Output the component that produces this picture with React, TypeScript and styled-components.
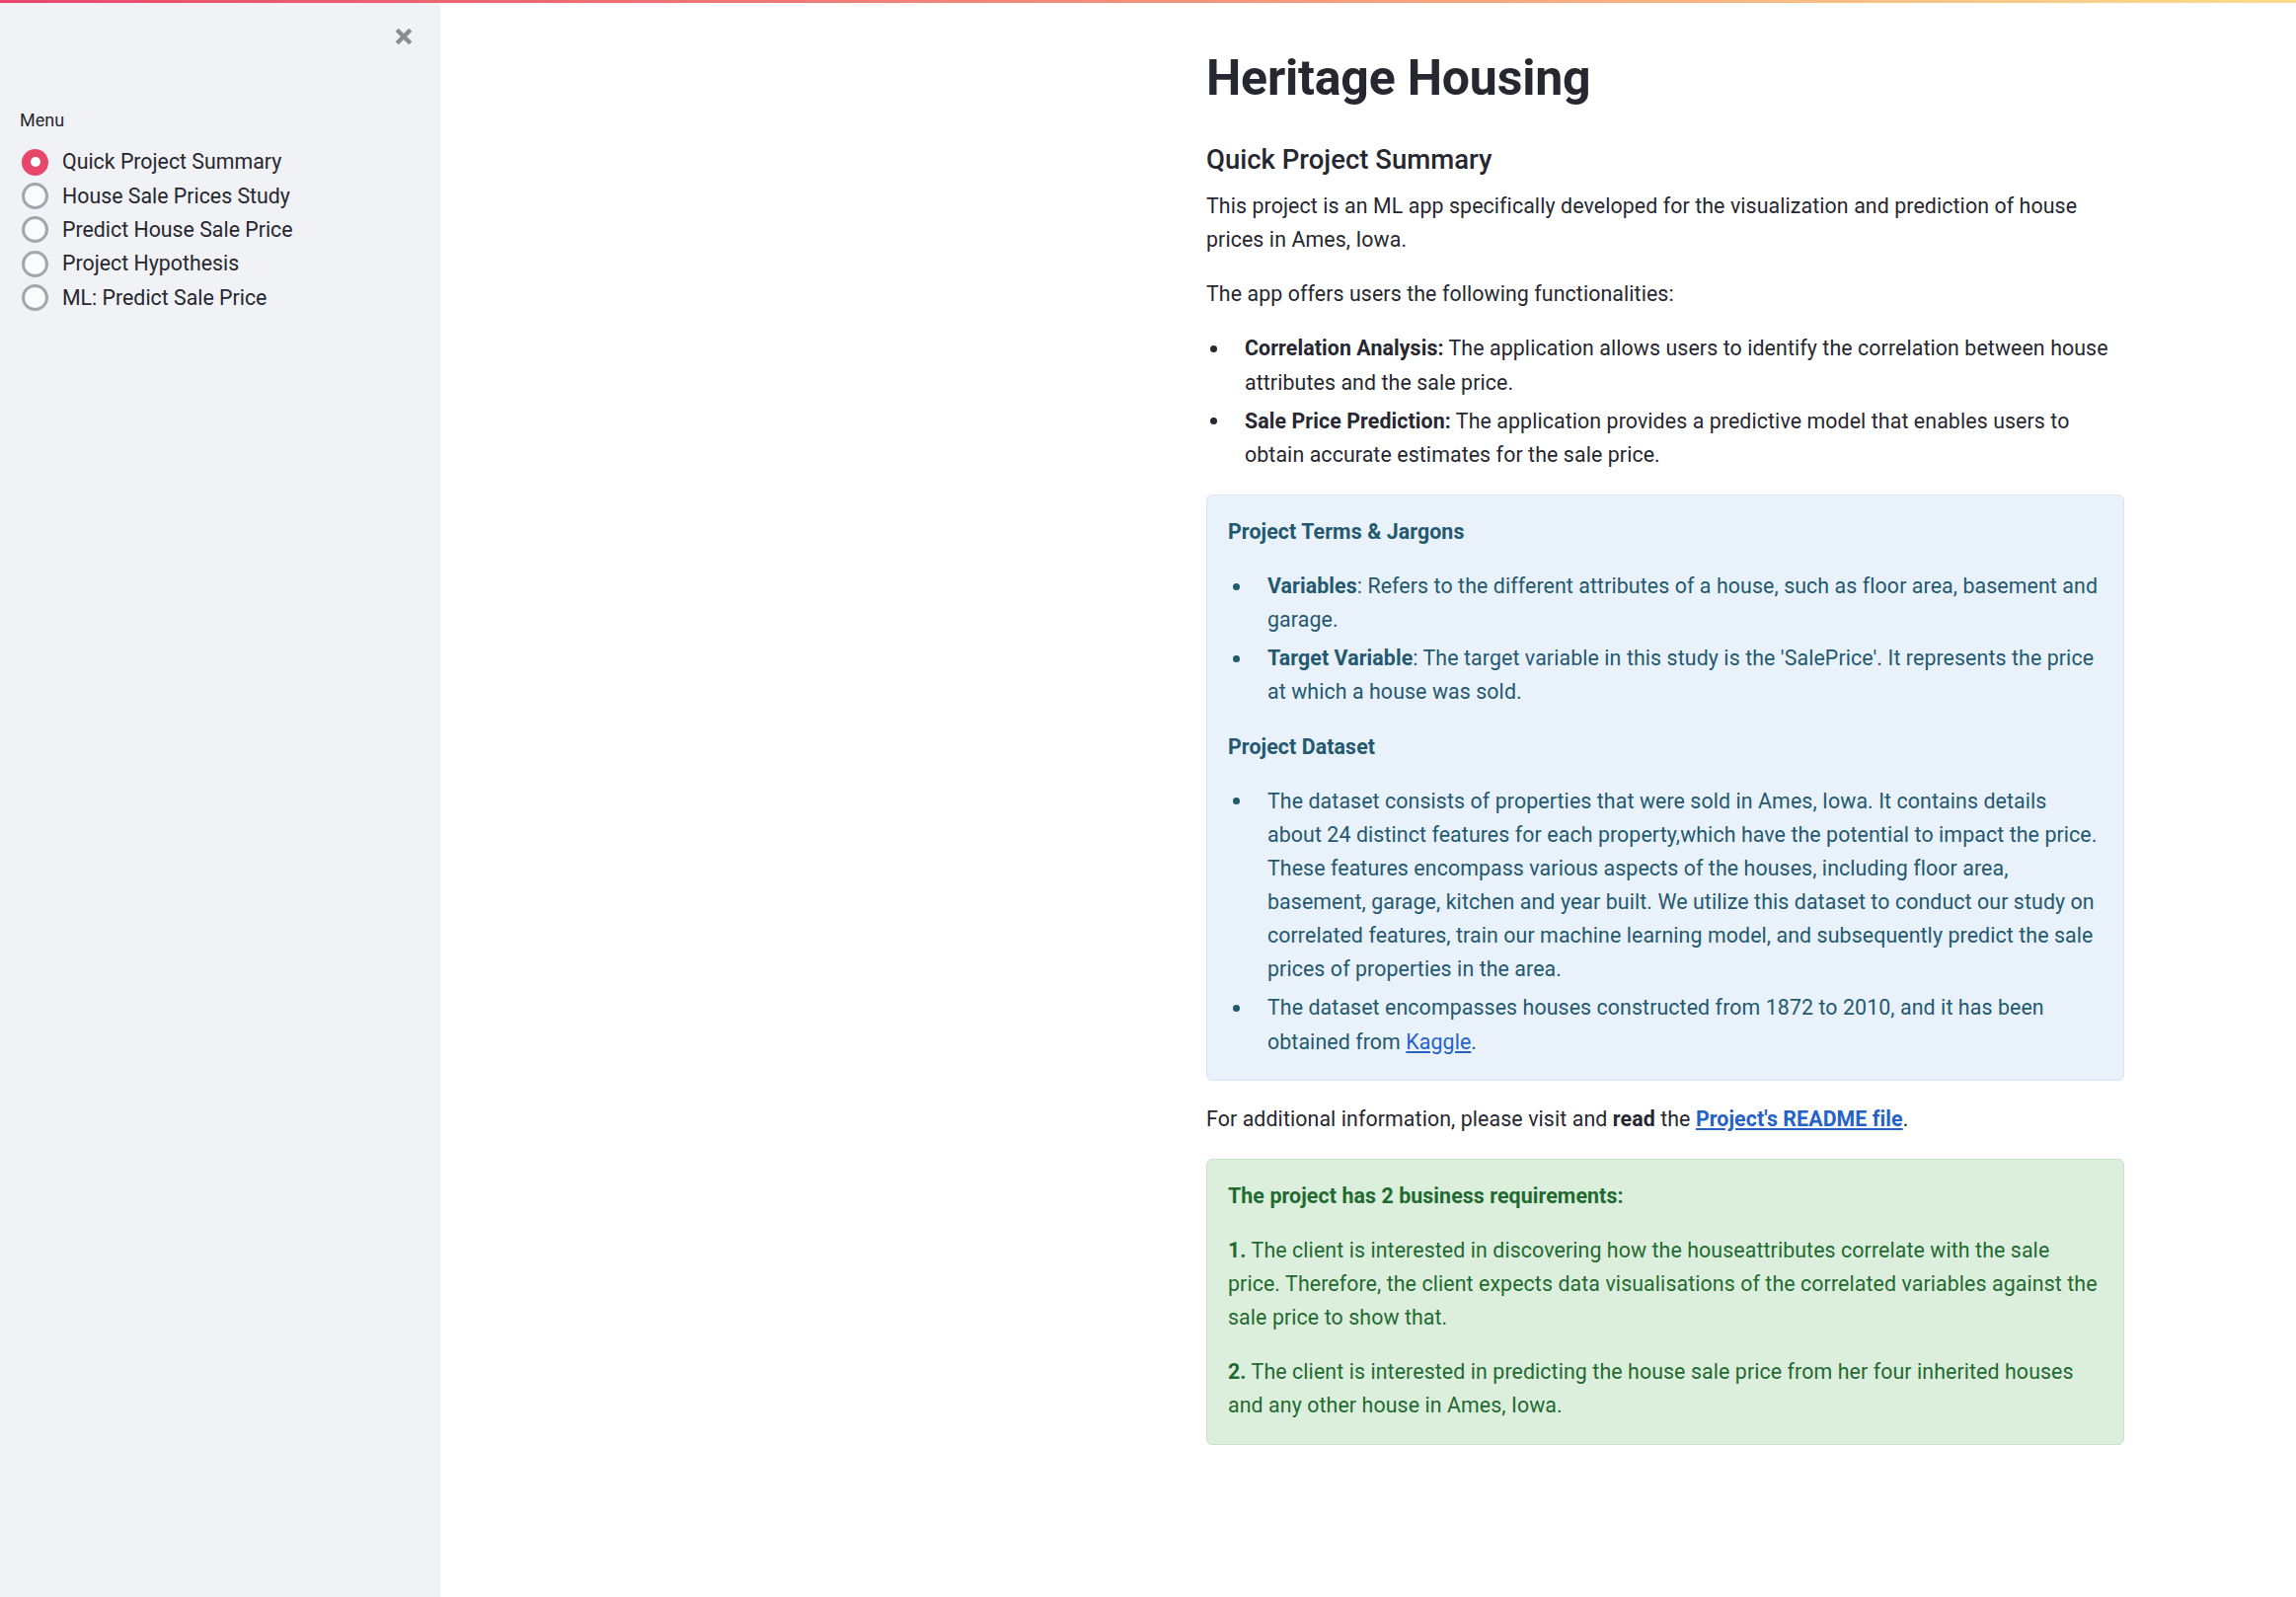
import React from "react";
import styled, { createGlobalStyle, css } from "styled-components";

const GlobalStyle = createGlobalStyle`
  html, body {
    margin: 0;
    padding: 0;
    background: #ffffff;
  }
  body {
    font-family: Roboto, "Liberation Sans", Arial, sans-serif;
    color: #262730;
    -webkit-font-smoothing: antialiased;
  }
  #root {
    min-height: 100vh;
  }
`;

const Page = styled.div`
  display: flex;
  flex-direction: column;
  min-height: 100vh;
`;

const TopBar = styled.div`
  height: 3px;
  flex-shrink: 0;
  background: linear-gradient(90deg, #e8476b 0%, #fcdc8c 100%);
`;

const Body = styled.div`
  display: flex;
  flex: 1;
`;

const Sidebar = styled.aside`
  width: 446px;
  flex-shrink: 0;
  box-sizing: border-box;
  background: #f0f2f6;
  padding: 24px 27px 0 20px;
  display: flex;
  flex-direction: column;
`;

const CloseRow = styled.div`
  display: flex;
  justify-content: flex-end;
  height: 20px;
`;

const CloseButton = styled.button`
  width: 20px;
  height: 20px;
  padding: 0;
  border: none;
  background: transparent;
  display: flex;
  align-items: center;
  justify-content: center;
  cursor: pointer;
`;

const MenuLabel = styled.div`
  margin-top: 63px;
  font-size: 18px;
  line-height: 24px;
  color: #262730;
`;

const RadioList = styled.div`
  margin-top: 13px;
  display: flex;
  flex-direction: column;
`;

const RadioRow = styled.label`
  display: flex;
  align-items: center;
  gap: 14px;
  height: 34.4px;
  padding-left: 2px;
  cursor: pointer;
`;

const RadioCircle = styled.span<{ $checked: boolean }>`
  position: relative;
  width: 27px;
  height: 27px;
  box-sizing: border-box;
  border-radius: 50%;
  flex-shrink: 0;
  ${(p) =>
    p.$checked
      ? css`
          background: #e8476b;
          &::after {
            content: "";
            position: absolute;
            left: 50%;
            top: 50%;
            width: 10px;
            height: 10px;
            margin: -5px 0 0 -5px;
            border-radius: 50%;
            background: #ffffff;
          }
        `
      : css`
          background: #fafbfc;
          border: 3px solid #a5a6ac;
        `}
`;

const RadioText = styled.span`
  font-size: 21.33px;
  line-height: 34px;
  color: #262730;
  white-space: nowrap;
`;

const Main = styled.main`
  flex: 1;
  padding-left: 776px;
`;

const Content = styled.div`
  width: 930px;
  padding-top: 46px;
  padding-bottom: 120px;
  white-space: nowrap;
`;

const Title = styled.h1`
  margin: 0;
  font-size: 50px;
  line-height: 60px;
  font-weight: 700;
  color: #262730;
  letter-spacing: -0.2px;
`;

const Subheader = styled.h3`
  margin: 36px 0 13px;
  font-size: 27.5px;
  line-height: 34px;
  font-weight: 500;
  color: #262730;
`;

const Text = styled.p`
  margin: 0 0 21px;
  font-size: 21.33px;
  line-height: 34.13px;
  letter-spacing: 0.1px;
`;

const BulletList = styled.ul`
  margin: 0 0 21px;
  padding-left: 39px;
  list-style: none;
  font-size: 21.33px;
  line-height: 34.13px;
  letter-spacing: 0.1px;

  li::before {
    content: "";
    display: inline-block;
    width: 7px;
    height: 7px;
    border-radius: 50%;
    background: currentColor;
    vertical-align: middle;
    margin: -2px 28px 0 -35px;
  }

  li + li {
    margin-top: 5px;
  }
`;

type Tone = "info" | "success";

const tones = {
  info: { bg: "#e9f1fb", border: "#d8e5f6", text: "#23596f" },
  success: { bg: "#dcefdc", border: "#c6e5c8", text: "#1f6a31" },
};

const Callout = styled.div<{ $tone: Tone }>`
  margin: 23px 0 22px;
  padding: 20px 21px 21px;
  border-radius: 6px;
  background: ${(p) => tones[p.$tone].bg};
  border: 1px solid ${(p) => tones[p.$tone].border};
  color: ${(p) => tones[p.$tone].text};

  & > *:last-child {
    margin-bottom: 0;
  }
`;

const CalloutList = styled(BulletList)`
  padding-left: 40px;
`;

const Strong = styled.strong`
  font-weight: 700;
`;

const Link = styled.a<{ $bold?: boolean }>`
  color: #2462c8;
  text-decoration: underline;
  font-weight: ${(p) => (p.$bold ? 700 : 400)};
`;

const menuItems = [
  "Quick Project Summary",
  "House Sale Prices Study",
  "Predict House Sale Price",
  "Project Hypothesis",
  "ML: Predict Sale Price",
];

const CloseIcon = () => (
  <svg width="20" height="20" viewBox="0 0 20 20" aria-hidden="true">
    <path
      d="M3.2 3.2 L16.8 16.8 M16.8 3.2 L3.2 16.8"
      stroke="#8b8c92"
      strokeWidth="4.4"
      strokeLinecap="butt"
      fill="none"
    />
  </svg>
);

export default function App() {
  const [selected, setSelected] = React.useState(0);
  return (
    <>
      <GlobalStyle />
      <Page>
        <TopBar />
        <Body>
          <Sidebar>
            <CloseRow>
              <CloseButton aria-label="Close sidebar">
                <CloseIcon />
              </CloseButton>
            </CloseRow>
            <MenuLabel>Menu</MenuLabel>
            <RadioList>
              {menuItems.map((item, i) => (
                <RadioRow key={item} onClick={() => setSelected(i)}>
                  <RadioCircle $checked={selected === i} />
                  <RadioText>{item}</RadioText>
                </RadioRow>
              ))}
            </RadioList>
          </Sidebar>
          <Main>
            <Content>
              <Title>Heritage Housing</Title>
              <Subheader>Quick Project Summary</Subheader>
              <Text>
                This project is an ML app specifically developed for the visualization and prediction of house
                <br />
                prices in Ames, Iowa.
              </Text>
              <Text>The app offers users the following functionalities:</Text>
              <BulletList>
                <li>
                  <Strong>Correlation Analysis:</Strong> The application allows users to identify the correlation between house
                  <br />
                  attributes and the sale price.
                </li>
                <li>
                  <Strong>Sale Price Prediction:</Strong> The application provides a predictive model that enables users to
                  <br />
                  obtain accurate estimates for the sale price.
                </li>
              </BulletList>

              <Callout $tone="info">
                <Text>
                  <Strong>Project Terms &amp; Jargons</Strong>
                </Text>
                <CalloutList>
                  <li>
                    <Strong>Variables</Strong>: Refers to the different attributes of a house, such as floor area, basement and
                    <br />
                    garage.
                  </li>
                  <li>
                    <Strong>Target Variable</Strong>: The target variable in this study is the 'SalePrice'. It represents the price
                    <br />
                    at which a house was sold.
                  </li>
                </CalloutList>
                <Text>
                  <Strong>Project Dataset</Strong>
                </Text>
                <CalloutList>
                  <li>
                    The dataset consists of properties that were sold in Ames, Iowa. It contains details
                    <br />
                    about 24 distinct features for each property,which have the potential to impact the price.
                    <br />
                    These features encompass various aspects of the houses, including floor area,
                    <br />
                    basement, garage, kitchen and year built. We utilize this dataset to conduct our study on
                    <br />
                    correlated features, train our machine learning model, and subsequently predict the sale
                    <br />
                    prices of properties in the area.
                  </li>
                  <li>
                    The dataset encompasses houses constructed from 1872 to 2010, and it has been
                    <br />
                    obtained from <Link href="#">Kaggle</Link>.
                  </li>
                </CalloutList>
              </Callout>

              <Text>
                For additional information, please visit and <Strong>read</Strong> the{" "}
                <Link href="#" $bold>
                  Project's README file
                </Link>
                .
              </Text>

              <Callout $tone="success">
                <Text>
                  <Strong>The project has 2 business requirements:</Strong>
                </Text>
                <Text>
                  <Strong>1.</Strong> The client is interested in discovering how the houseattributes correlate with the sale
                  <br />
                  price. Therefore, the client expects data visualisations of the correlated variables against the
                  <br />
                  sale price to show that.
                </Text>
                <Text>
                  <Strong>2.</Strong> The client is interested in predicting the house sale price from her four inherited houses
                  <br />
                  and any other house in Ames, Iowa.
                </Text>
              </Callout>
            </Content>
          </Main>
        </Body>
      </Page>
    </>
  );
}
